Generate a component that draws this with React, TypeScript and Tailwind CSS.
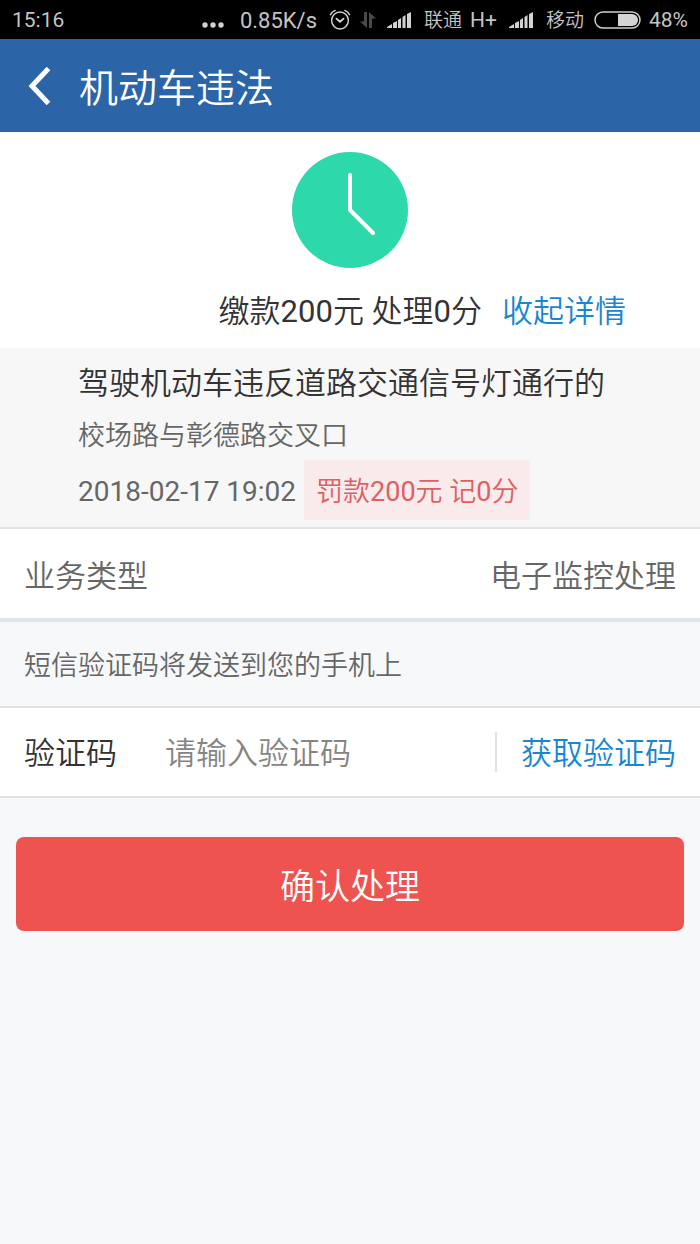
import React from 'react';

function SignalBars() {
  return (
    <svg viewBox="0 0 25 17" className="h-[17px] w-[25px] shrink-0" fill="#d2d2d2" aria-hidden="true">
      <path d="M0 17v-1l5-3v4z" />
      <path d="M6 17v-5l4-2v7z" />
      <path d="M11 17V9l3-2v10z" />
      <path d="M15.500 17V6l3-2v13z" />
      <path d="M20 17V3l4-2v16z" />
    </svg>
  );
}

function AlarmIcon() {
  return (
    <svg
      viewBox="0 0 22 22"
      className="h-[22px] w-[22px] shrink-0"
      fill="none"
      stroke="#cfcfcf"
      strokeWidth="1.5"
      strokeLinecap="round"
      aria-hidden="true"
    >
      <circle cx="11" cy="11.500" r="8.4" />
      <path d="M1.5 5.600C2.500 3.600 4 2.200 6.200 1.400M15.800 1.400c2.200.8 3.700 2.200 4.700 4.200" />
      <path d="M7.5 9.700l3.500 3 3.500-3" strokeWidth="1.8" />
    </svg>
  );
}

function DataArrows() {
  return (
    <svg viewBox="0 0 18 18" className="h-[18px] w-[18px] shrink-0" fill="#4a4a4a" aria-hidden="true">
      <path d="M5 1h3v16L1 10.500h4z" />
      <path d="M13 17h-3V1l7 6.500h-4z" />
    </svg>
  );
}

function BatteryIcon() {
  return (
    <svg viewBox="0 0 47 18" className="h-[18px] w-[47px] shrink-0" aria-hidden="true">
      <rect x="1" y="1" width="45" height="16" rx="8" fill="none" stroke="#cfcfcf" strokeWidth="1.5" />
      <path d="M24 3h14a6 6 0 0 1 0 12H24z" fill="#d4d4d4" />
    </svg>
  );
}

function StatusBar() {
  return (
    <div className="flex h-[39px] items-center bg-black px-3 text-[21px] leading-none text-[#c4c4c4]">
      <span className="pt-0.5">15:16</span>
      <svg viewBox="0 0 22 6" className="ml-auto mt-2.5 h-[6px] w-[22px] shrink-0" fill="#d2d2d2" aria-hidden="true">
        <circle cx="3" cy="3" r="2.700" />
        <circle cx="11" cy="3" r="2.700" />
        <circle cx="19" cy="3" r="2.700" />
      </svg>
      <span className="ml-4 mr-3 pt-0.5 text-[22px]">0.85K/s</span>
      <AlarmIcon />
      <span className="ml-2 mr-2.5 flex">
        <DataArrows />
      </span>
      <SignalBars />
      <span className="ml-3 pt-0.5 text-[19px]">联通</span>
      <span className="ml-2 mr-3 pt-0.5">H+</span>
      <SignalBars />
      <span className="ml-3 mr-2.5 pt-0.5 text-[19px]">移动</span>
      <BatteryIcon />
      <span className="ml-2 pt-0.5">48%</span>
    </div>
  );
}

function Header() {
  return (
    <header className="flex h-[93px] items-center bg-[#2b65a8] pl-7 text-white">
      <button type="button" aria-label="返回" className="mr-7 flex">
        <svg viewBox="0 0 23 38" className="h-[38px] w-[23px]" fill="none" stroke="currentColor" strokeWidth="5" aria-hidden="true">
          <path d="M20.500 1.500L4 19l16.500 17.500" />
        </svg>
      </button>
      <h1 className="pt-1.5 text-[39px] leading-[56px]">机动车违法</h1>
    </header>
  );
}

export default function App() {
  return (
    <div className="min-h-screen bg-[#f6f8fa] font-['Roboto','Noto_Sans_CJK_SC_DemiLight','Noto_Sans_CJK_SC',sans-serif] text-[#333]">
      <StatusBar />
      <Header />

      <main>
        <section className="bg-white pb-3.5 pt-5">
          <svg viewBox="0 0 116 116" className="mx-auto h-[116px] w-[116px]" aria-hidden="true">
            <circle cx="58" cy="58" r="58" fill="#2dd8aa" />
            <path
              d="M58 23v35l23 23"
              fill="none"
              stroke="#fff"
              strokeWidth="4"
              strokeLinecap="round"
              strokeLinejoin="round"
            />
          </svg>
          <div className="mt-[22px] flex items-center justify-end gap-5 pr-[74px] text-[31px] leading-[44px]">
            <p>缴款200元 处理0分</p>
            <button type="button" className="text-[#1a86d0]">
              收起详情
            </button>
          </div>
        </section>

        <section className="border-b-2 border-[#e2e2e2] bg-[#f7f7f7] pb-[7px] pl-[78px] pr-6 pt-3">
          <h2 className="text-[31px] leading-[48px]">驾驶机动车违反道路交通信号灯通行的</h2>
          <p className="pb-0.5 pt-1.5 text-[27px] leading-[44px] text-[#666]">校场路与彰德路交叉口</p>
          <div className="flex items-center gap-2 text-[27px] leading-[56px] text-[#666]">
            <time dateTime="2018-02-17T19:02" className="pt-1 text-[28px]">
              2018-02-17 19:02
            </time>
            <span className="bg-[#f9ebeb] px-3 pt-1 text-[#de6062]">罚款200元 记0分</span>
          </div>
        </section>

        <section className="flex h-[93px] items-center justify-between border-b-4 border-[#dfe4ea] bg-white px-6 pt-2 text-[31px] text-[#666]">
          <span>业务类型</span>
          <span>电子监控处理</span>
        </section>

        <p className="px-6 pt-1 text-[27px] leading-[80px] text-[#666]">短信验证码将发送到您的手机上</p>

        <form onSubmit={(e) => e.preventDefault()}>
          <div className="flex h-[92px] items-center border-y-2 border-[#e2e2e2] bg-white px-6 text-[31px]">
            <label htmlFor="code" className="shrink-0 pt-1">
              验证码
            </label>
            <input
              id="code"
              type="text"
              inputMode="numeric"
              placeholder="请输入验证码"
              className="ml-12 min-w-0 flex-1 bg-transparent pt-1 outline-none placeholder:text-[#858585]"
            />
            <button type="button" className="shrink-0 border-l-2 border-[#e2e2e2] pl-6 pt-1 leading-[36px] text-[#1a86d0]">
              获取验证码
            </button>
          </div>
          <div className="px-4 pt-[39px]">
            <button type="submit" className="h-[94px] w-full rounded-lg bg-[#ef5350] pt-2 text-[35px] text-white">
              确认处理
            </button>
          </div>
        </form>
      </main>
    </div>
  );
}
